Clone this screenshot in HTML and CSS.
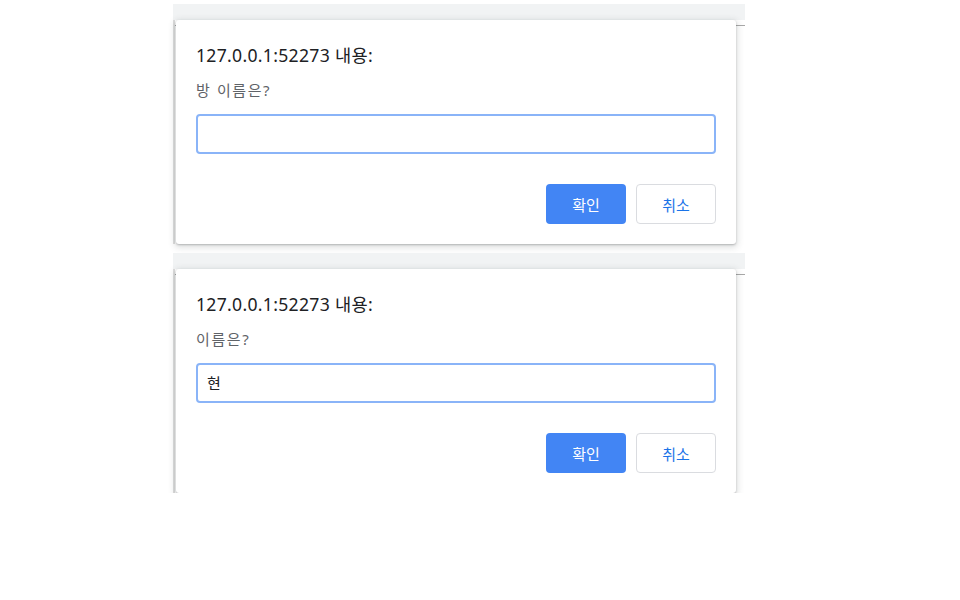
FILE: index.html
```html
<!DOCTYPE html>
<html lang="ko">
<head>
<meta charset="utf-8">
<link rel="stylesheet" href="styles.css">
</head>
<body>
<div class="stack">
  <section class="panel">
    <div class="strip"></div>
    <div class="page"></div>
    <div class="dialog">
      <div class="title">127.0.0.1:52273 내용:</div>
      <div class="prompt">방 이름은?</div>
      <div class="input"></div>
      <div class="actions">
        <button class="btn ok">확인</button>
        <button class="btn cancel">취소</button>
      </div>
    </div>
  </section>
  <section class="panel">
    <div class="strip"></div>
    <div class="page"></div>
    <div class="dialog">
      <div class="title">127.0.0.1:52273 내용:</div>
      <div class="prompt">이름은?</div>
      <div class="input">현</div>
      <div class="actions">
        <button class="btn ok">확인</button>
        <button class="btn cancel">취소</button>
      </div>
    </div>
  </section>
</div>
</body>
</html>
```
FILE: styles.css
```css
html, body {
  margin: 0;
  background: #ffffff;
}
body {
  font-family: "Noto Sans", "Noto Sans CJK KR", sans-serif;
}
.stack {
  display: flex;
  flex-direction: column;
  gap: 9px;
  padding: 4px 0 0 173px;
}
.panel {
  position: relative;
  width: 572px;
  height: 240px;
}
.strip {
  height: 16px;
  background: #f1f3f4;
}
.page {
  height: 224px;
  border-left: 2px solid #dcdcdc;
  box-sizing: border-box;
  background: linear-gradient(#ffffff 5px, #a8a8a8 5px, #a8a8a8 6px, #ffffff 6px);
}
.dialog {
  position: absolute;
  top: 16px;
  left: 3px;
  width: 560px;
  height: 224px;
  box-sizing: border-box;
  background: #fff;
  border-radius: 3px;
  box-shadow: 0 1px 2px rgba(60,64,67,.3), 0 2px 6px 2px rgba(60,64,67,.15);
  padding: 23px 20px 20px 20px;
  display: flex;
  flex-direction: column;
}
.title {
  font-size: 17.6px;
  letter-spacing: 0.3px;
  line-height: 24px;
  color: #202124;
}
.prompt {
  margin-top: 13px;
  font-size: 15px;
  letter-spacing: 1.6px;
  line-height: 20px;
  color: #5f6368;
}
.input {
  margin-top: 14px;
  height: 40px;
  box-sizing: border-box;
  border: 2px solid #8ab4f8;
  border-radius: 4px;
  padding: 0 9px;
  font-family: "Noto Sans CJK KR", sans-serif;
  font-size: 15px;
  line-height: 36px;
  color: #202124;
}
.actions {
  margin-top: 30px;
  display: flex;
  justify-content: flex-end;
  gap: 10px;
}
.btn {
  width: 80px;
  height: 40px;
  border-radius: 4px;
  font-family: "Noto Sans CJK KR", sans-serif;
  font-size: 15px;
  padding: 0;
}
.ok {
  background: #4285f4;
  border: none;
  color: #fff;
}
.cancel {
  background: #fff;
  border: 1px solid #dadce0;
  color: #1a73e8;
}
```
